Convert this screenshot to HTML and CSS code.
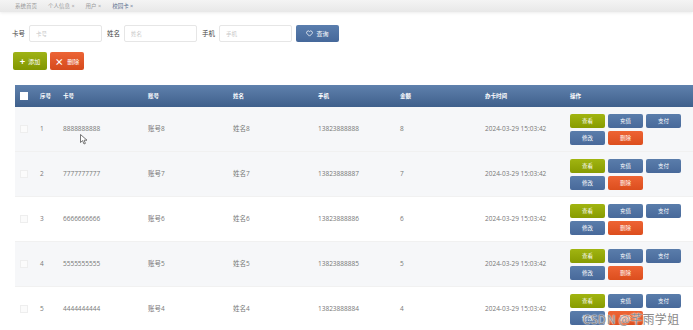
FILE: index.html
```html
<!doctype html>
<html lang="zh">
 <head>
  <meta charset="UTF-8">
  <link rel="stylesheet" href="styles.css">
  <title>校园卡</title>
 </head>
 <body>
  <div class="tabs">
    <span>系统首页</span>
    <span>个人信息 ×</span>
    <span>用户 ×</span>
    <span class="on">校园卡 ×</span>
  </div>

  <div class="search">
    <label>卡号</label><input type="text" placeholder="卡号">
    <label>姓名</label><input type="text" placeholder="姓名">
    <label>手机</label><input type="text" placeholder="手机">
    <button class="btn-query">
      <svg width="7" height="7" viewBox="0 0 16 16"><path d="M8 14 L2.2 8.2 A3.4 3.4 0 0 1 8 3.6 A3.4 3.4 0 0 1 13.8 8.2 Z" fill="none" stroke="#fff" stroke-width="1.8" stroke-linejoin="round"/></svg>
      查询
    </button>
  </div>

  <div class="tools">
    <button class="btn-add"><b>+</b> 添加</button>
    <button class="btn-del"><b>×</b> 删除</button>
  </div>

  <table class="list">
    <colgroup>
      <col style="width:20px"><col style="width:23px"><col style="width:85px"><col style="width:85px"><col style="width:85px">
      <col style="width:82px"><col style="width:85px"><col style="width:85px"><col style="width:128px">
    </colgroup>
    <thead>
      <tr>
        <th><i class="chk head"></i></th>
        <th>序号</th><th>卡号</th><th>账号</th><th>姓名</th><th>手机</th><th>金额</th><th>办卡时间</th><th>操作</th>
      </tr>
    </thead>
    <tbody>
      <tr class="gray">
        <td><i class="chk"></i></td><td>1</td><td>8888888888</td><td>账号8</td><td>姓名8</td><td>13823888888</td><td>8</td><td>2024-03-29 15:03:42</td>
        <td><div class="ops"><span class="o-view">查看</span><span class="o-blue">充值</span><span class="o-blue">支付</span><span class="o-blue">修改</span><span class="o-red">删除</span></div></td>
      </tr>
      <tr class="gray">
        <td><i class="chk"></i></td><td>2</td><td>7777777777</td><td>账号7</td><td>姓名7</td><td>13823888887</td><td>7</td><td>2024-03-29 15:03:42</td>
        <td><div class="ops"><span class="o-view">查看</span><span class="o-blue">充值</span><span class="o-blue">支付</span><span class="o-blue">修改</span><span class="o-red">删除</span></div></td>
      </tr>
      <tr>
        <td><i class="chk"></i></td><td>3</td><td>6666666666</td><td>账号6</td><td>姓名6</td><td>13823888886</td><td>6</td><td>2024-03-29 15:03:42</td>
        <td><div class="ops"><span class="o-view">查看</span><span class="o-blue">充值</span><span class="o-blue">支付</span><span class="o-blue">修改</span><span class="o-red">删除</span></div></td>
      </tr>
      <tr class="gray">
        <td><i class="chk"></i></td><td>4</td><td>5555555555</td><td>账号5</td><td>姓名5</td><td>13823888885</td><td>5</td><td>2024-03-29 15:03:42</td>
        <td><div class="ops"><span class="o-view">查看</span><span class="o-blue">充值</span><span class="o-blue">支付</span><span class="o-blue">修改</span><span class="o-red">删除</span></div></td>
      </tr>
      <tr>
        <td><i class="chk"></i></td><td>5</td><td>4444444444</td><td>账号4</td><td>姓名4</td><td>13823888884</td><td>4</td><td>2024-03-29 15:03:42</td>
        <td><div class="ops"><span class="o-view">查看</span><span class="o-blue">充值</span><span class="o-blue">支付</span><span class="o-blue">修改</span><span class="o-red">删除</span></div></td>
      </tr>
    </tbody>
  </table>

  <svg class="cursor" width="8" height="11" viewBox="0 0 8 11"><path d="M0.5 0.5 L0.5 8.5 L2.6 6.6 L4 10 L5.4 9.4 L4.1 6.2 L7 6.2 Z" fill="#fff" stroke="#555" stroke-width="0.8" stroke-linejoin="round"/></svg>
  <div class="mark">CSDN @芊雨学姐</div>
 </body>
</html>
```

FILE: styles.css
```css
body{margin:0;padding:0;background:#fff;font-family:"Open Sans","Noto Sans CJK SC",sans-serif;color:#777;overflow:hidden;}
.tabs{
    height:12px;display:flex;align-items:center;gap:11px;padding-left:15px;
    background:linear-gradient(#f4f4f4,#e8e8e8);box-shadow:0 1px 3px rgba(0,0,0,0.08);
    font-size:5.5px;color:#9a9a9a;
}
.tabs .on{color:#5a6f8f;}

.search{display:flex;align-items:center;height:17px;margin:13px 0 0 12px;font-size:6.5px;color:#444;}
.search label{flex:0 0 12px;margin-right:4px;white-space:nowrap;line-height:17px;}
.search input{
    flex:0 0 73px;width:73px;height:17px;box-sizing:border-box;margin:0 5px 0 0;
    border:1px solid #e6e6e6;border-radius:2px;outline:none;padding:0 6px;
    font:5.5px "Open Sans","Noto Sans CJK SC",sans-serif;
}
.search input::placeholder{color:#c8c8c8;}
.btn-query{
    flex:0 0 43px;height:17px;margin-left:-1px;border:0;border-radius:2px;padding:0;
    background:linear-gradient(#5a7eae,#45689a);color:#fff;
    font:6px "Noto Sans CJK SC",sans-serif;display:flex;align-items:center;justify-content:center;gap:3px;
}

.tools{display:flex;gap:3px;margin:10px 0 0 13px;}
.tools button{
    width:34px;height:18px;border:0;border-radius:2px;color:#fff;padding:0;
    font:6px "Noto Sans CJK SC",sans-serif;
}
.tools b{font-size:9px;margin-right:2px;vertical-align:-1px;}
.btn-add{background:linear-gradient(#9fb316,#819600);}
.btn-del{background:linear-gradient(#ec6436,#d64a1c);}

.list{
    margin:15px 0 0 15px;width:678px;table-layout:fixed;border-collapse:collapse;
    font-size:6.5px;
}
.list th{
    height:22px;padding:0 0 0 5px;text-align:left;color:#fff;font-weight:bold;font-size:5.5px;
    background:linear-gradient(#5f81ad,#3f608c);
}
.list td{height:44px;padding:0 0 0 5px;border-bottom:1px solid #f1f1f1;white-space:nowrap;line-height:1;}
.list tr.gray td{background:#f6f7f9;}
.chk{display:inline-block;width:6px;height:6px;border:1px solid #eee;background:#fbfbfb;vertical-align:middle;}
.chk.head{background:#fff;border-color:#fff;}

.ops{display:grid;grid-template-columns:repeat(3,35px);gap:3px;}
.ops span{
    height:14px;border-radius:2px;color:#fff;font:5.5px "Noto Sans CJK SC",sans-serif;
    display:flex;align-items:center;justify-content:center;
}
.o-view{background:linear-gradient(#a1b511,#879b00);}
.o-blue{background:linear-gradient(#5a7dab,#48699a);}
.o-red{background:linear-gradient(#ee6434,#dc4e1e);}

.cursor{position:absolute;left:80px;top:134px;}
.mark{
    position:absolute;left:583px;top:310px;font:12px "Noto Sans CJK SC",sans-serif;color:#8a8a8a;
    text-shadow:0 0 2px #fff,0 0 1px #fff;letter-spacing:0.3px;
}
```
